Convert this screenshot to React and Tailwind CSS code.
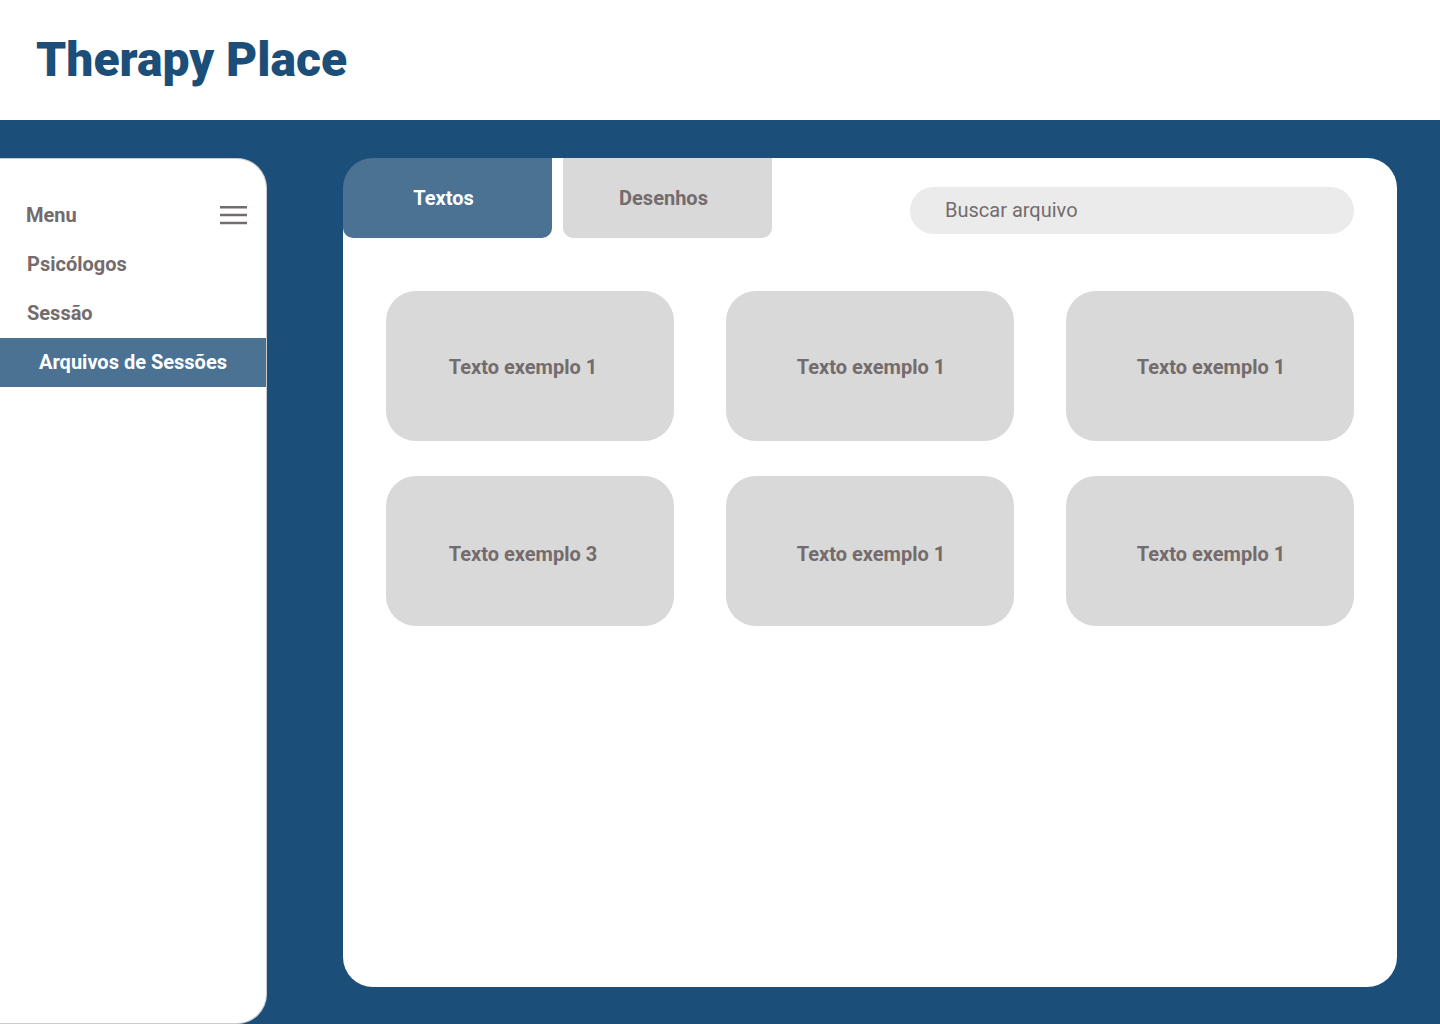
import React from "react";

const navItems = ["Psicólogos", "Sessão"];

const fileRows = [
  { textClass: "pt-0.5", files: ["Texto exemplo 1", "Texto exemplo 1", "Texto exemplo 1"] },
  { textClass: "pt-1.5", files: ["Texto exemplo 3", "Texto exemplo 1", "Texto exemplo 1"] },
];

function Header() {
  return (
    <header className="flex h-[120px] items-center bg-white px-9">
      <h1 className="text-5xl font-black text-[#1b4e78]">Therapy Place</h1>
    </header>
  );
}

function Sidebar() {
  return (
    <aside className="w-[267px] shrink-0 rounded-r-[30px] border border-l-0 border-[#cccaca] bg-white pt-8">
      <div className="flex h-[49px] items-center justify-between pr-[19px] pb-0.5 pl-[26px]">
        <span>Menu</span>
        <button type="button" aria-label="Abrir menu">
          <svg width="27" height="20" viewBox="0 0 27 20" stroke="currentColor" strokeWidth="2.4" aria-hidden="true">
            <path d="M0 2.3h27M0 10h27M0 18h27" />
          </svg>
        </button>
      </div>
      <nav aria-label="Principal">
        {navItems.map((item) => (
          <a key={item} href="#" className="flex h-[49px] items-center pb-0.5 pl-[27px]">
            {item}
          </a>
        ))}
        <a href="#" aria-current="page" className="flex h-[49px] items-center justify-center bg-[#4b7292] pb-0.5 text-white">
          Arquivos de Sessões
        </a>
      </nav>
    </aside>
  );
}

function Toolbar() {
  return (
    <div className="flex items-start justify-between gap-6 pr-[43px]">
      <div role="tablist" className="flex gap-[11px]">
        <button
          type="button"
          role="tab"
          aria-selected="true"
          className="h-20 w-[209px] rounded-b-[10px] rounded-tl-[30px] bg-[#4b7292] pr-2 text-white"
        >
          Textos
        </button>
        <button type="button" role="tab" aria-selected="false" className="h-20 w-[209px] rounded-b-[10px] bg-[#d9d9d9] pr-2">
          Desenhos
        </button>
      </div>
      <input
        type="search"
        aria-label="Buscar arquivo"
        placeholder="Buscar arquivo"
        className="mt-[29px] h-[47px] w-[444px] rounded-full bg-[#ebebeb] px-[35px] pb-0.5 font-normal outline-none placeholder:text-[#746b6d]"
      />
    </div>
  );
}

function FileGrid() {
  return (
    <div className="grid grid-cols-3 gap-x-[52px] gap-y-[35px] px-[43px] pt-[53px]">
      {fileRows.map((row, r) =>
        row.files.map((name, c) => (
          <button
            key={`${r}-${c}`}
            type="button"
            className={`h-[150px] rounded-[30px] bg-[#d9d9d9] ${row.textClass} ${c === 0 ? "pr-3.5" : "pl-0.5"}`}
          >
            {name}
          </button>
        ))
      )}
    </div>
  );
}

export default function App() {
  return (
    <div className="flex min-h-screen flex-col bg-[#1b4e78] font-[Roboto,sans-serif] text-xl font-bold text-[#746b6d]">
      <Header />
      <div className="flex flex-1 pt-[38px]">
        <Sidebar />
        <main className="mr-[43px] mb-[37px] ml-[76px] flex-1 rounded-[30px] rounded-tl-[36px] bg-white">
          <Toolbar />
          <FileGrid />
        </main>
      </div>
    </div>
  );
}
